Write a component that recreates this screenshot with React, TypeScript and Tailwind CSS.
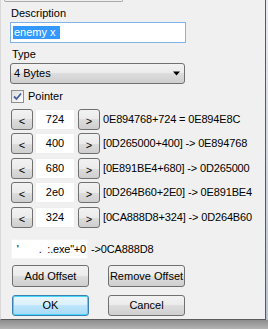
import React from "react";

const font = { fontFamily: '"Liberation Sans", Arial, sans-serif' };

function Btn({ children, className = "" }: { children: React.ReactNode; className?: string }) {
  return (
    <div
      className={
        "flex items-center justify-center rounded-[3px] border border-[#707070] bg-[linear-gradient(to_bottom,#f2f2f2_0%,#ebebeb_50%,#dddddd_50%,#cfcfcf_100%)] text-[11px] text-black " +
        className
      }
    >
      {children}
    </div>
  );
}

function OffsetRow({ value, text, mt }: { value: string; text: string; mt: string }) {
  return (
    <div className={"flex h-[21px] items-center " + mt}>
      <Btn className="h-[21px] w-[22px] ml-[1px]">
        <span className="mt-[3px]">&lt;</span>
      </Btn>
      <div className="ml-[2px] flex h-[21px] w-[40px] items-center justify-center border border-[#eeeeee] bg-white text-[11px]">
        {value}
      </div>
      <Btn className="ml-[3px] h-[21px] w-[22px]">
        <span className="mt-[3px]">&gt;</span>
      </Btn>
      <div className="ml-[3px] whitespace-pre text-[11px] tracking-[-0.15px]">{text}</div>
    </div>
  );
}

export default function App() {
  return (
    <div className="flex h-[329px] w-[268px] flex-col overflow-hidden bg-[#f0f0f0]" style={font}>
      <div className="flex h-[320px]">
        <div className="relative flex h-[320px] w-[266px] flex-col border-b border-l border-r border-[#5a5a5a] border-l-[#d8d8d8] pl-[9px]">
          <div className="-ml-[6px] h-[2px] w-[119px] rounded-b-[2px] border-b border-l border-r border-[#a8a8a8]" />
          <div className="mt-[5px] h-[13px] leading-[13px] text-[11px] pl-[1px]">Description</div>
          <div className="mt-[2px] flex h-[21px] w-[176px] items-center border border-[#7eb4ea] bg-white pl-[2px]">
            <span className="bg-[#3399ff] px-[1px] text-[11px] leading-[13px] text-white">enemy x&nbsp;</span>
          </div>
          <div className="mt-[5px] h-[13px] leading-[13px] text-[11px] pl-[2px]">Type</div>
          <div className="mt-[2px] flex h-[21px] w-[175px] items-center justify-between rounded-[3px] border border-[#707070] bg-[linear-gradient(to_bottom,#f2f2f2_0%,#ebebeb_50%,#dddddd_50%,#cfcfcf_100%)] pl-[3px] pr-[4px] text-[11px]">
            <span>4 Bytes</span>
            <svg width="7" height="5" viewBox="0 0 7 5">
              <path d="M0 0.5H7L3.5 4.5Z" fill="#000" />
            </svg>
          </div>
          <div className="mt-[6px] flex h-[13px] items-center pl-[1px]">
            <div className="flex h-[13px] w-[13px] items-center justify-center border border-[#8f8f8f] bg-[linear-gradient(135deg,#dcdcdc,#ffffff)]">
              <svg width="9" height="9" viewBox="0 0 9 9">
                <path d="M1 4.5L3.5 7L8 1.5" stroke="#4a5f97" strokeWidth="1.8" fill="none" />
              </svg>
            </div>
            <span className="ml-[4px] text-[11px]">Pointer</span>
          </div>
          <OffsetRow mt="mt-[6px]" value="724" text="0E894768+724 = 0E894E8C" />
          <OffsetRow mt="mt-[3px]" value="400" text="[0D265000+400] -> 0E894768" />
          <OffsetRow mt="mt-[4px]" value="680" text="[0E891BE4+680] -> 0D265000" />
          <OffsetRow mt="mt-[3px]" value="2e0" text="[0D264B60+2E0] -> 0E891BE4" />
          <OffsetRow mt="mt-[4px]" value="324" text="[0CA888D8+324] -> 0D264B60" />
          <div className="mt-[11px] flex h-[20px] items-center">
            <div className="ml-[1px] flex h-[20px] w-[77px] shrink-0 items-center justify-end whitespace-pre border border-[#f4f4f4] bg-white pl-[1px] pr-[1px] text-[11px] tracking-[-0.2px]">
              {"'       .  :.exe\"+0"}
            </div>
            <span className="ml-[3px] text-[11px] tracking-[-0.15px]">-&gt;0CA888D8</span>
          </div>
          <div className="mt-[6px] flex h-[22px] items-center">
            <Btn className="ml-[2px] h-[22px] w-[77px]">Add Offset</Btn>
            <Btn className="ml-[19px] h-[22px] w-[77px]">Remove Offset</Btn>
          </div>
          <div className="mt-[8px] flex h-[21px] items-center">
            <div className="ml-[2px] flex h-[21px] w-[77px] items-center justify-center rounded-[3px] border border-[#3c7fb1] bg-[linear-gradient(to_bottom,#eaf6fd_0%,#d9f0fc_50%,#bee6fd_50%,#a7d9f5_100%)] text-[11px] shadow-[inset_0_0_0_1px_#48d6fa]">
              OK
            </div>
            <Btn className="ml-[19px] h-[21px] w-[77px]">Cancel</Btn>
          </div>
        </div>
        <div className="h-[320px] w-[2px] bg-[linear-gradient(to_bottom,#e8edf2,#b8c4d0)]" />
      </div>
      <div className="h-[9px] w-[268px] bg-[linear-gradient(to_bottom,#8c8c8c,#b4b4b4)]" />
    </div>
  );
}
